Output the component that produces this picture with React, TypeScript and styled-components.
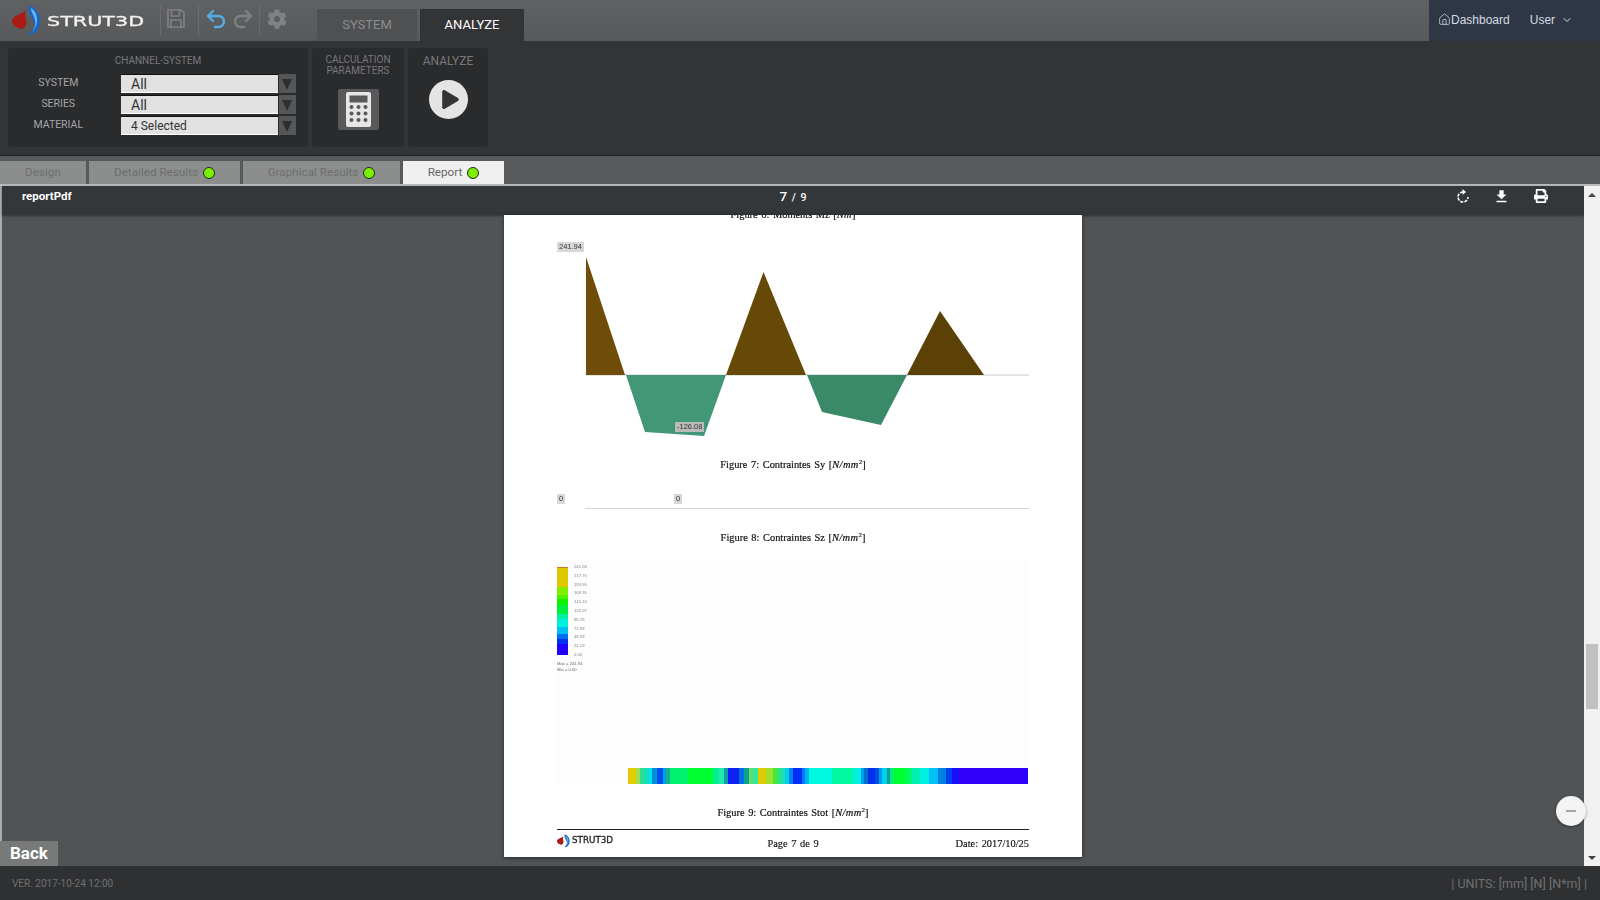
import React from 'react';
import styled, { createGlobalStyle } from 'styled-components';
import { House, ChevronDown, Undo2, Redo2, Minus } from 'lucide-react';
import { FaCog, FaPrint, FaPlay } from 'react-icons/fa';
import { MdFileDownload } from 'react-icons/md';

const GlobalStyle = createGlobalStyle`
    html, body { margin: 0; padding: 0; height: 100%; overflow: hidden; }
    body { font-family: Roboto, "Liberation Sans", sans-serif; background: #2f3031; }
    * { box-sizing: border-box; }
`;

// colour bands of the stress strip: [end position in px, colour]
const STRIP_BANDS: [number, string][] = [
    [8, '#e0cc00'], [12, '#a0e050'], [16, '#30e090'], [21, '#10e0c0'], [24, '#00e0f0'], [29, '#0090d8'], [35, '#0050f0'],
    [38, '#00a0e0'], [42, '#10b090'], [60, '#00f070'], [85, '#00ff30'], [91, '#00f090'], [96, '#20e8b0'], [100, '#10a0a0'],
    [111, '#1020f0'], [116, '#0070e0'], [121, '#10a090'], [125, '#60e060'], [130, '#30e8a0'], [138, '#e0cc00'], [145, '#a0e030'],
    [151, '#40e840'], [157, '#20e0b0'], [161, '#00d0e8'], [165, '#0080e8'], [174, '#0030f8'], [177, '#0080f0'], [181, '#00b0f0'],
    [204, '#00f8e0'], [225, '#00f8a0'], [233, '#00f0e0'], [236, '#00a0f0'], [240, '#0070d0'], [247, '#0030e8'], [251, '#0050e0'],
    [254, '#00a0e8'], [259, '#00d0f0'], [262, '#10a090'], [265, '#00e890'], [279, '#00ff30'], [284, '#00f870'], [292, '#00f0b0'],
    [301, '#00f0e0'], [310, '#00c0f8'], [318, '#0080e0'], [324, '#0040f0'], [331, '#1810f8'], [400, '#3000ff'],
];

const stripGradient = (bands: [number, string][]) => {
    const stops: string[] = [];
    let start = 0;
    bands.forEach(([end, color]) => {
        stops.push(`${color} ${start}px ${end}px`);
        start = end;
    });
    return `linear-gradient(90deg, ${stops.join(', ')})`;
};

const LEGEND_VALUES = ['241.94', '217.75', '193.55', '169.35', '145.16', '120.97', '96.78', '72.58', '48.39', '24.19', '0.00'];

const Shell = styled.div`
    display: flex;
    flex-direction: column;
    width: 100vw;
    height: 100vh;
    overflow: hidden;
`;

const Header = styled.header`
    display: flex;
    height: 41px;
    flex: none;
    background: linear-gradient(180deg, #606163, #58595b);
`;

const LogoLink = styled.div`
    display: flex;
    align-items: center;
    gap: 6px;
    width: 160px;
    padding-left: 12px;
`;

const LogoText = styled.span<{ $dark?: boolean }>`
    font-family: "DejaVu Sans", sans-serif;
    font-size: ${p => (p.$dark ? '8.5px' : '14px')};
    line-height: 1;
    color: ${p => (p.$dark ? '#222' : '#f2f2f2')};
    -webkit-text-stroke: .3px currentColor;
    transform: scaleX(${p => (p.$dark ? 1.03 : 1.48)});
    transform-origin: left center;
`;

const IconSlot = styled.div<{ $width: number; $shift?: number }>`
    display: flex;
    align-items: center;
    justify-content: center;
    gap: 3px;
    width: ${p => p.$width}px;
    height: 31px;
    margin-top: 5px;
    padding: 0 ${p => p.$shift ?? 0}px 4px 0;
    border-left: 1px solid #6b6c6e;
`;

const MainTabs = styled.nav`
    display: flex;
    align-items: flex-end;
    gap: 3px;
    margin-left: 23px;
`;

const MainTab = styled.div<{ $active?: boolean }>`
    display: flex;
    align-items: center;
    justify-content: center;
    width: ${p => (p.$active ? '104px' : '100px')};
    height: 32px;
    padding-bottom: 2px;
    font-size: 13px;
    color: ${p => (p.$active ? '#fff' : '#8b8c8d')};
    background: ${p => (p.$active ? '#333435' : '#4f5052')};
`;

const UserArea = styled.div`
    display: flex;
    align-items: center;
    width: 171px;
    height: 100%;
    margin-left: auto;
    padding: 0 0 2px 9px;
    background: #2f3746;
    color: #d5dae2;
    font-family: "Liberation Sans", sans-serif;
    font-size: 12px;
`;

const UserName = styled.span`
    display: flex;
    align-items: center;
    gap: 6px;
    margin-left: 20px;
`;

const Toolbar = styled.section`
    display: flex;
    flex: none;
    gap: 4px;
    height: 114px;
    padding: 7px 0 0 8px;
    background: #333435;
`;

const Group = styled.div<{ $width: number; $inset?: number }>`
    display: flex;
    flex-direction: column;
    align-items: center;
    width: ${p => p.$width}px;
    height: 99px;
    padding-top: ${p => p.$inset ?? 7}px;
    border-radius: 4px;
    background: #2a2b2d;
`;

const GroupTitle = styled.div<{ $size?: number }>`
    font-size: ${p => p.$size ?? 10}px;
    line-height: 11px;
    text-align: center;
    color: #77797c;
`;

const FieldGrid = styled.div`
    display: grid;
    grid-template-columns: 112.5px 157px 18px;
    grid-auto-rows: 19px;
    row-gap: 2px;
    align-self: flex-start;
    margin-top: 8px;
`;

const FieldLabel = styled.div`
    padding-right: 12px;
    font-size: 10.5px;
    line-height: 18px;
    text-align: center;
    color: #a4a6a9;
`;

const SelectBox = styled.div<{ $size: number }>`
    display: flex;
    align-items: center;
    padding-left: 10.5px;
    border-top: 1px solid #111;
    border-bottom: 1px solid #fff;
    background: #e1e1e1;
    font-size: ${p => p.$size}px;
    color: #333;
`;

const SelectArrow = styled.div`
    display: flex;
    align-items: center;
    justify-content: center;
    margin-left: 1px;
    background: #555658;
    &::after {
        content: '';
        margin-top: 2px;
        border-left: 5.5px solid transparent;
        border-right: 5.5px solid transparent;
        border-top: 11px solid #2d2e30;
    }
`;

const CalcButton = styled.div`
    display: flex;
    align-items: center;
    justify-content: center;
    width: 41px;
    height: 41px;
    margin-top: 13px;
    border-radius: 2px;
    background: #58595b;
`;

const PlayButton = styled.div`
    display: flex;
    align-items: center;
    justify-content: center;
    width: 39px;
    height: 39px;
    margin-top: 13px;
    padding-left: 4px;
    border-radius: 50%;
    background: #e4e4e4;
    color: #333435;
    font-size: 19px;
`;

const TabStrip = styled.nav`
    display: flex;
    flex: none;
    gap: 3px;
    align-items: flex-end;
    height: 29px;
    border-top: 1px solid #242526;
    background: #58595b;
`;

const ResultTab = styled.div<{ $width: number; $active?: boolean }>`
    display: flex;
    align-items: center;
    justify-content: center;
    gap: 5px;
    width: ${p => p.$width}px;
    height: 23px;
    padding-bottom: 1px;
    font-size: 11.7px;
    color: ${p => (p.$active ? '#666' : '#6d6e6e')};
    background: ${p => (p.$active ? '#f0f0f0' : '#8c8e8d')};
`;

const StatusDot = styled.span`
    width: 12px;
    height: 12px;
    margin-top: 2px;
    border-radius: 50%;
    border: 1.5px solid #1d2a18;
    background: #7cf000;
`;

const Viewer = styled.main`
    position: relative;
    display: flex;
    flex: 1;
    min-height: 0;
    border-top: 2px solid #b8b9b9;
`;

const ViewerPane = styled.div`
    display: flex;
    flex: 1;
    flex-direction: column;
    min-width: 0;
    border-left: 2px solid #a9abac;
    background: #505457;
`;

const ViewerBar = styled.div`
    display: grid;
    grid-template-columns: 1fr auto 1fr;
    align-items: center;
    flex: none;
    height: 29px;
    padding: 0 20px 9px;
    background: #33373a;
    box-shadow: 0 1px 2px rgba(0, 0, 0, .4);
    color: #fff;
`;

const DocName = styled.div`
    font-size: 11.5px;
    font-weight: 700;
`;

const PageCount = styled.div`
    font-size: 10.5px;
    font-weight: 500;
    word-spacing: 2px;
    & > b { font-size: 13.5px; font-weight: 500; }
`;

const ViewerActions = styled.div`
    display: flex;
    align-items: center;
    justify-content: flex-end;
    gap: 24px;
    margin-right: 16px;
    font-size: 14px;
`;

const PageScroller = styled.div`
    flex: 1;
    min-height: 0;
    display: flex;
    justify-content: center;
`;

const PdfPage = styled.article`
    display: flex;
    flex-direction: column;
    width: 578px;
    height: 642px;
    padding: 0 53px;
    overflow: hidden;
    background: #fff;
    box-shadow: 0 1px 4px rgba(0, 0, 0, .5);
    color: #111;
`;

const Caption = styled.div<{ $top: number }>`
    height: 12px;
    margin-top: ${p => p.$top}px;
    font-family: "Liberation Serif", serif;
    font-size: 10.4px;
    line-height: 12px;
    text-align: center;
    word-spacing: 1px;
    white-space: nowrap;
    -webkit-text-stroke: .2px currentColor;
    filter: blur(.3px);
    & > em { letter-spacing: .4px; }
    & sup { font-size: 7px; line-height: 0; }
`;

const ChartBlock = styled.div<{ $top: number; $height: number }>`
    position: relative;
    flex: none;
    height: ${p => p.$height}px;
    margin-top: ${p => p.$top}px;
`;

const ChartSvg = styled.svg`
    display: block;
    margin-left: 28px;
    filter: blur(.25px);
`;

const ValueTag = styled.span<{ $left: number; $top: number; $dark?: boolean }>`
    position: absolute;
    left: ${p => p.$left}px;
    top: ${p => p.$top}px;
    height: 10px;
    padding: 0 2px;
    background: ${p => (p.$dark ? '#b9bbb9' : '#d8d8d8')};
    font-family: "Liberation Sans", sans-serif;
    font-size: 7.5px;
    line-height: 10px;
    color: #333;
    filter: blur(.3px);
`;

const ZeroLine = styled.div`
    position: absolute;
    left: 28px;
    right: 0;
    bottom: 0;
    height: 1px;
    background: #d4d4d4;
`;

const PlotArea = styled.div`
    flex: none;
    height: 224px;
    margin-top: 16px;
    padding-top: 7px;
    background: #fdfdfd;
`;

const LegendBlock = styled.div`
    height: 201px;
    filter: blur(.65px);
`;

const LegendRow = styled.div`
    display: flex;
    gap: 6px;
    height: 88px;
`;

const LegendBar = styled.div`
    width: 11px;
    height: 88px;
    background: linear-gradient(180deg, #c87820 0 1px, #e0c800 1px 20px, #80f000 20px 28px, #50f000 28px 32px, #10f000 32px 38px,
        #00f040 38px 47px, #00f0a0 47px 52px, #00f0e0 52px 60px, #00c0f0 60px 67px, #0070f0 67px 72px, #0030f0 72px 77px, #2000ff 77px 88px);
`;

const LegendScale = styled.div`
    display: flex;
    flex-direction: column;
    justify-content: space-between;
    margin: -2px 0;
    font-family: "Liberation Sans", sans-serif;
    font-size: 4.2px;
    line-height: 4px;
    color: #888;
`;

const LegendNote = styled.div`
    margin-top: 6px;
    font-family: "Liberation Sans", sans-serif;
    font-size: 4.2px;
    line-height: 6px;
    color: #666;
`;

const Strip = styled.div`
    width: 400px;
    height: 16px;
    margin-left: 71px;
    background: ${stripGradient(STRIP_BANDS)};
    filter: blur(.35px);
`;

const PageFooter = styled.footer`
    display: grid;
    grid-template-columns: 1fr 1fr 1fr;
    align-items: center;
    height: 22px;
    margin-top: 10px;
    border-top: 1px solid #222;
    font-family: "Liberation Serif", serif;
    font-size: 10.4px;
    word-spacing: 1px;
    -webkit-text-stroke: .15px currentColor;
    filter: blur(.25px);
`;

const FooterLogo = styled.div`
    display: flex;
    align-items: center;
    gap: 2px;
`;

const FooterCenter = styled.div`
    margin-top: 5px;
    text-align: center;
`;

const FooterRight = styled.div`
    margin-top: 5px;
    text-align: right;
`;

const BackButton = styled.div`
    position: absolute;
    left: 0;
    bottom: 0;
    width: 58px;
    height: 25px;
    padding-left: 10px;
    background: #777a78;
    color: #fff;
    font-size: 17px;
    font-weight: 700;
    line-height: 25px;
`;

const ZoomButton = styled.div`
    position: absolute;
    right: 14px;
    bottom: 40px;
    display: flex;
    align-items: center;
    justify-content: center;
    width: 30px;
    height: 30px;
    border-radius: 50%;
    background: #f4f4f4;
    box-shadow: 0 1px 3px rgba(0, 0, 0, .4);
    color: #555;
`;

const Scrollbar = styled.div`
    display: flex;
    flex-direction: column;
    flex: none;
    width: 16px;
    background: #f1f1f1;
`;

const ScrollArrow = styled.div<{ $down?: boolean }>`
    display: flex;
    align-items: center;
    justify-content: center;
    height: 17px;
    &::after {
        content: '';
        border-left: 4px solid transparent;
        border-right: 4px solid transparent;
        border-${p => (p.$down ? 'top' : 'bottom')}: 4px solid #444;
    }
`;

const ScrollTrack = styled.div`
    flex: 1;
    padding: 441px 2px 0;
`;

const ScrollThumb = styled.div`
    height: 65px;
    background: #c1c1c1;
`;

const Footer = styled.footer`
    display: flex;
    align-items: center;
    justify-content: space-between;
    flex: none;
    height: 34px;
    padding: 0 13px 0 12px;
    background: #2f3031;
    color: #6f7174;
`;

const Version = styled.span`
    font-size: 10px;
`;

const Units = styled.span`
    font-size: 12.5px;
`;

const LogoMark: React.FC<{ size: number }> = ({ size }) => (
    <svg width={size} height={size * 1.07} viewBox="0 0 29 31">
        <path d="M14 5 C10 10 0 10 0 16 C0 21 7 24 11 24 C15 20 15 16 14 14 C13 11 13 8 14 5Z" fill="#ab1a14" />
        <path d="M17 1 C24 1 29 10 28 19 C27 26 22 30 15 30 C19 27 23 24 22 18 C21 12 15 9 17 1Z" fill="#1c65c0" />
        <path d="M19 3 C23 5 26 11 25 18 C24 22 22 25 20 27 C23 22 24 19 23 15 C22 10 19 8 19 3Z" fill="#62b4ee" />
    </svg>
);

const SaveIcon = () => (
    <svg width="18" height="19" viewBox="0 0 18 19" fill="none" stroke="#808183" strokeWidth="1.7">
        <path d="M1 1 H14 L17 4 V18 H1 Z" fill="#58595b" />
        <path d="M4.5 1 V7 H12.5 V1" />
        <path d="M4 18 V11 H14 V18" />
    </svg>
);

const RefreshIcon = () => (
    <svg width="12" height="14" viewBox="0 0 12 14" fill="none" stroke="#fff" strokeWidth="1.6">
        <path d="M6 3 A5 5 0 1 0 11 8" strokeDasharray="3 1.2" />
        <path d="M5.5 0 L9 3 L5.5 6Z" fill="#fff" stroke="none" />
    </svg>
);

const CalculatorIcon = () => (
    <svg width="25" height="35" viewBox="0 0 25 35">
        <rect width="25" height="35" rx="2" fill="#e6e6e6" />
        <rect x="3.5" y="3.5" width="18" height="7" fill="#58595b" />
        {[15, 21.5, 28].map(cy =>
            [5.5, 12.5, 19.5].map(cx => <circle key={`${cx}-${cy}`} cx={cx} cy={cy} r="2" fill="#58595b" />)
        )}
    </svg>
);

const MomentChart = () => (
    <ChartSvg width="444" height="205" viewBox="0 0 444 205">
        <line x1="0" y1="135" x2="444" y2="135" stroke="#c9c9c9" strokeWidth="1" />
        <polygon points="1,17 40,135 1,135" fill="#6f4c08" />
        <polygon points="141,135 178.5,32 221,135" fill="#664807" />
        <polygon points="322,135 355,71 399,135" fill="#5b4106" />
        <polygon points="41,135 60,192 119,196 141,135" fill="#429876" />
        <polygon points="222,135 237,172 296,185 322,135" fill="#3a8a69" />
    </ChartSvg>
);

const FigureCaption: React.FC<{ top: number; label: string }> = ({ top, label }) => (
    <Caption $top={top}>
        {label} [<em>N/mm</em><sup>2</sup>]
    </Caption>
);

export default function App() {
    return (
        <Shell>
            <GlobalStyle />
            <Header>
                <LogoLink>
                    <LogoMark size={29} />
                    <LogoText>STRUT3D</LogoText>
                </LogoLink>
                <IconSlot $width={38} $shift={7}><SaveIcon /></IconSlot>
                <IconSlot $width={61}>
                    <Undo2 size={24} color="#52ade8" strokeWidth={2.4} />
                    <Redo2 size={24} color="#808183" strokeWidth={2.4} />
                </IconSlot>
                <IconSlot $width={35}><FaCog size={20} color="#808183" /></IconSlot>
                <MainTabs>
                    <MainTab>SYSTEM</MainTab>
                    <MainTab $active>ANALYZE</MainTab>
                </MainTabs>
                <UserArea>
                    <House size={13} strokeWidth={1.4} />
                    <span>Dashboard</span>
                    <UserName>User <ChevronDown size={12} /></UserName>
                </UserArea>
            </Header>
            <Toolbar>
                <Group $width={300}>
                    <GroupTitle>CHANNEL-SYSTEM</GroupTitle>
                    <FieldGrid>
                        <FieldLabel>SYSTEM</FieldLabel>
                        <SelectBox $size={14}>All</SelectBox>
                        <SelectArrow />
                        <FieldLabel>SERIES</FieldLabel>
                        <SelectBox $size={14}>All</SelectBox>
                        <SelectArrow />
                        <FieldLabel>MATERIAL</FieldLabel>
                        <SelectBox $size={12}>4 Selected</SelectBox>
                        <SelectArrow />
                    </FieldGrid>
                </Group>
                <Group $width={92} $inset={6}>
                    <GroupTitle>CALCULATION<br />PARAMETERS</GroupTitle>
                    <CalcButton><CalculatorIcon /></CalcButton>
                </Group>
                <Group $width={80} $inset={8}>
                    <GroupTitle $size={12}>ANALYZE</GroupTitle>
                    <PlayButton><FaPlay /></PlayButton>
                </Group>
            </Toolbar>
            <TabStrip>
                <ResultTab $width={86}>Design</ResultTab>
                <ResultTab $width={151}>Detailed Results <StatusDot /></ResultTab>
                <ResultTab $width={157}>Graphical Results <StatusDot /></ResultTab>
                <ResultTab $width={101} $active>Report <StatusDot /></ResultTab>
            </TabStrip>
            <Viewer>
                <ViewerPane>
                    <ViewerBar>
                        <DocName>reportPdf</DocName>
                        <PageCount><b>7</b> / 9</PageCount>
                        <ViewerActions>
                            <RefreshIcon />
                            <MdFileDownload size={17} />
                            <FaPrint size={14} />
                        </ViewerActions>
                    </ViewerBar>
                    <PageScroller>
                        <PdfPage>
                            <Caption $top={-6}>Figure 6: Moments Mz [<em>Nm</em>]</Caption>
                            <ChartBlock $top={19} $height={205}>
                                <MomentChart />
                                <ValueTag $left={0} $top={2}>241.94</ValueTag>
                                <ValueTag $left={118} $top={182} $dark>-126.08</ValueTag>
                            </ChartBlock>
                            <FigureCaption top={14} label="Figure 7: Contraintes Sy" />
                            <ChartBlock $top={19} $height={19}>
                                <ValueTag $left={0} $top={4}>0</ValueTag>
                                <ValueTag $left={117} $top={4}>0</ValueTag>
                                <ZeroLine />
                            </ChartBlock>
                            <FigureCaption top={23} label="Figure 8: Contraintes Sz" />
                            <PlotArea>
                                <LegendBlock>
                                    <LegendRow>
                                        <LegendBar />
                                        <LegendScale>
                                            {LEGEND_VALUES.map(value => <span key={value}>{value}</span>)}
                                        </LegendScale>
                                    </LegendRow>
                                    <LegendNote>Max = 241.94<br />Min = 0.00</LegendNote>
                                </LegendBlock>
                                <Strip />
                            </PlotArea>
                            <FigureCaption top={23} label="Figure 9: Contraintes Stot" />
                            <PageFooter>
                                <FooterLogo>
                                    <LogoMark size={13} />
                                    <LogoText $dark>STRUT3D</LogoText>
                                </FooterLogo>
                                <FooterCenter>Page 7 de 9</FooterCenter>
                                <FooterRight>Date: 2017/10/25</FooterRight>
                            </PageFooter>
                        </PdfPage>
                    </PageScroller>
                </ViewerPane>
                <Scrollbar>
                    <ScrollArrow />
                    <ScrollTrack><ScrollThumb /></ScrollTrack>
                    <ScrollArrow $down />
                </Scrollbar>
                <BackButton>Back</BackButton>
                <ZoomButton><Minus size={16} strokeWidth={1.5} /></ZoomButton>
            </Viewer>
            <Footer>
                <Version>VER. 2017-10-24 12:00</Version>
                <Units>| UNITS: [mm] [N] [N*m] |</Units>
            </Footer>
        </Shell>
    );
}
